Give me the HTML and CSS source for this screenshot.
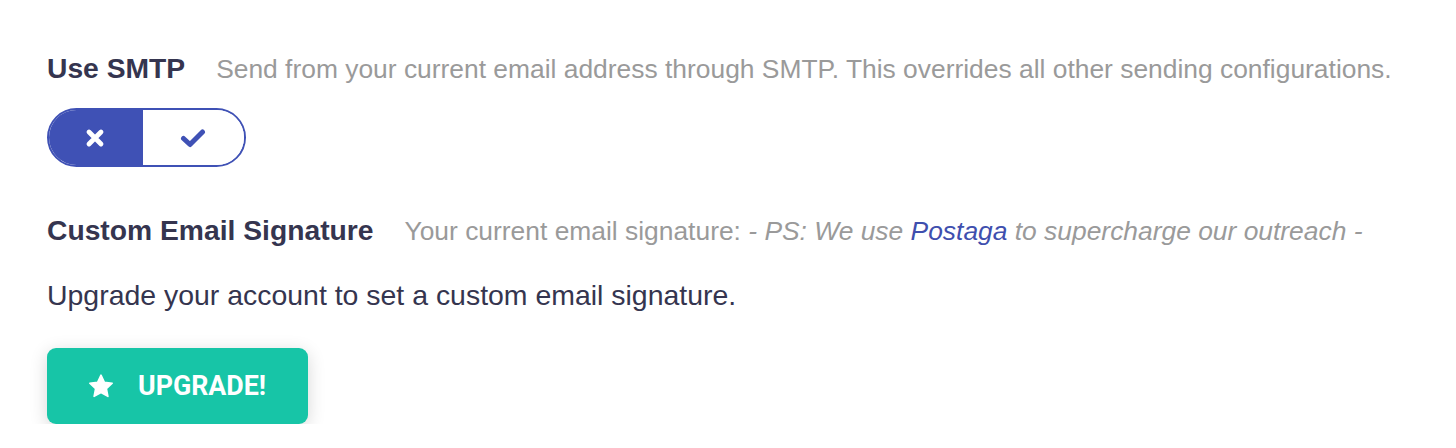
FILE: index.html
```html
<!DOCTYPE html>
<html>
<head>
<meta charset="utf-8">
<link rel="stylesheet" href="styles.css">
</head>
<body>
<main class="settings">
  <section class="setting">
    <div class="setting-head">
      <h3 class="setting-title">Use SMTP</h3>
      <span class="setting-desc">Send from your current email address through SMTP. This overrides all other sending configurations.</span>
    </div>
    <div class="toggle">
      <button class="toggle-opt toggle-off is-active" aria-label="Off">
        <svg width="20" height="20" viewBox="0 0 20 20"><path d="M4 4 L16 16 M16 4 L4 16" stroke="#fff" stroke-width="4.8" stroke-linecap="round" fill="none"/></svg>
      </button>
      <button class="toggle-opt toggle-on" aria-label="On">
        <svg width="26" height="22" viewBox="0 0 26 22"><path d="M3.5 11.5 L10 17.5 L22.5 5" stroke="#3f51b5" stroke-width="5" stroke-linecap="round" stroke-linejoin="round" fill="none"/></svg>
      </button>
    </div>
  </section>

  <section class="setting setting-sig">
    <div class="setting-head">
      <h3 class="setting-title">Custom Email Signature</h3>
      <span class="setting-desc">Your current email signature: <em>- PS: We use <a href="#" class="link">Postaga</a> to supercharge our outreach -</em></span>
    </div>
    <p class="setting-note">Upgrade your account to set a custom email signature.</p>
    <button class="upgrade-btn">
      <svg class="star" width="26" height="24" viewBox="0 0 26 24"><path d="M13 1.2 L16.4 8.3 L24.2 9.2 L18.4 14.6 L19.9 22.4 L13 18.5 L6.1 22.4 L7.6 14.6 L1.8 9.2 L9.6 8.3 Z" fill="#fff" stroke="#fff" stroke-width="1.6" stroke-linejoin="round"/></svg>
      <span>UPGRADE!</span>
    </button>
  </section>
</main>
</body>
</html>
```
FILE: styles.css
```css
html, body {
  margin: 0;
  padding: 0;
  background: #ffffff;
}

body {
  font-family: "Liberation Sans", Arial, Helvetica, sans-serif;
  color: #35354f;
}

.settings {
  padding: 51px 0 0 47px;
}

.setting-head {
  display: flex;
  align-items: baseline;
  gap: 31px;
  line-height: 34px;
  white-space: nowrap;
}

.setting-title {
  margin: 0;
  font-size: 28.25px;
  font-weight: 700;
  color: #35354f;
}

.setting-desc {
  font-size: 26.4px;
  color: #9a9a9a;
}

.setting-desc em {
  font-style: italic;
}

.link {
  color: #3f4fae;
  text-decoration: none;
}

.toggle {
  margin-top: 22px;
  display: flex;
  width: 199px;
  height: 59px;
  box-sizing: border-box;
  border: 2px solid #3f51b5;
  border-radius: 30px;
  overflow: hidden;
}

.toggle-opt {
  flex: 1;
  border: 0;
  margin: 0;
  padding: 0;
  display: flex;
  align-items: center;
  justify-content: center;
  background: #fff;
  cursor: pointer;
}

.toggle-off {
  flex: 0 0 94px;
  padding-right: 3px;
}

.toggle-on {
  padding-right: 2px;
}

.toggle-opt.is-active {
  background: #3f51b5;
}

.setting-sig {
  margin-top: 46px;
}

.setting-note {
  margin: 30px 0 0;
  font-size: 28.45px;
  line-height: 34px;
  color: #35354f;
}

.upgrade-btn {
  margin-top: 36px;
  display: flex;
  align-items: center;
  gap: 24px;
  width: 261px;
  height: 76px;
  box-sizing: border-box;
  padding: 0 0 0 41px;
  border: 0;
  border-radius: 9px;
  background: #17c5a7;
  color: #fff;
  font-family: Roboto, "Liberation Sans", sans-serif;
  font-weight: 700;
  font-size: 26.8px;
  box-shadow: 0 4px 18px rgba(0, 0, 0, 0.16);
  cursor: pointer;
}

.star {
  display: block;
}
```
